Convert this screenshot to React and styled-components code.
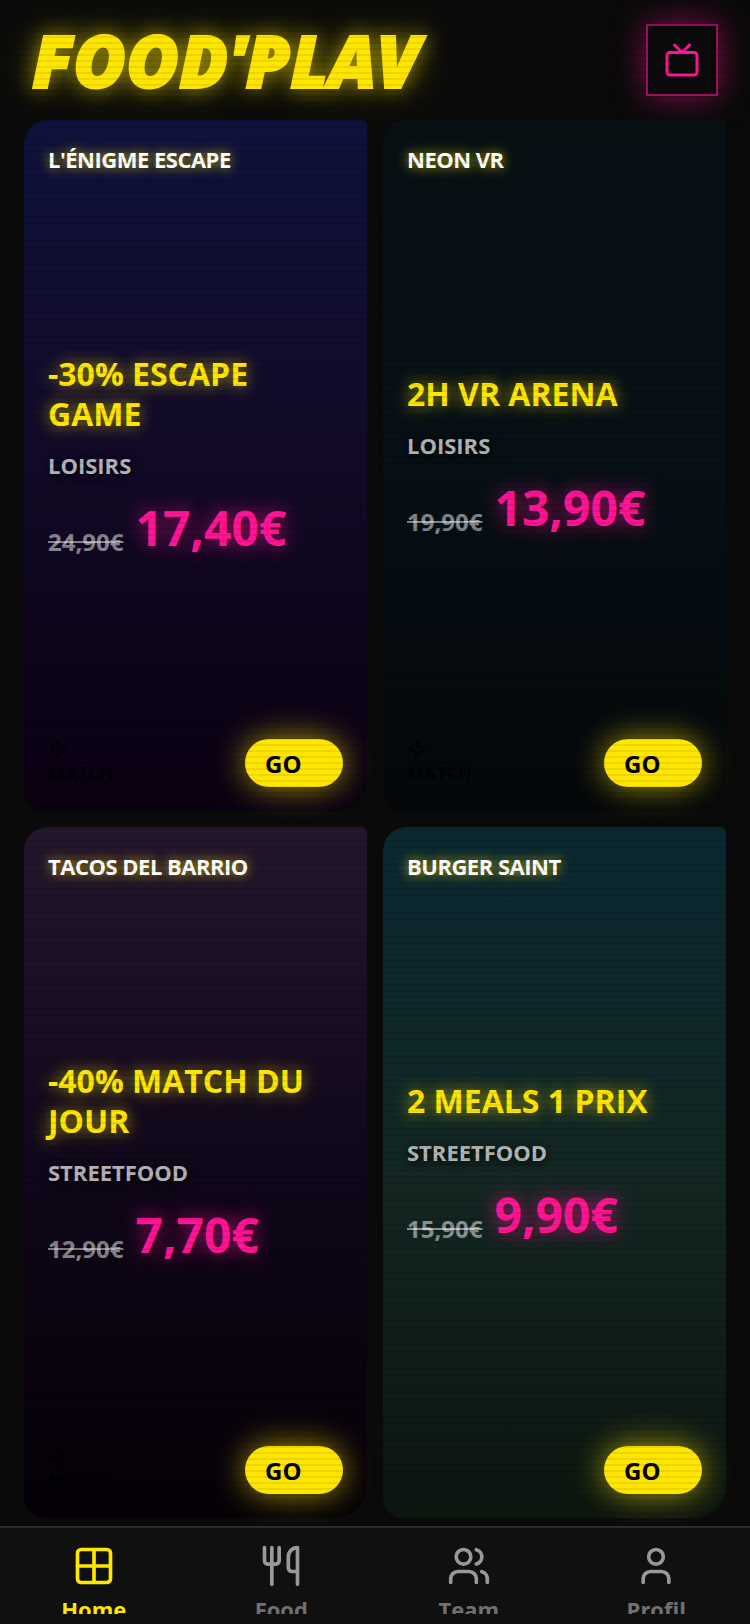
import styled, { createGlobalStyle } from "styled-components"
import { Tv, Grid2x2, Utensils, Users, User, Zap } from "lucide-react"

const offers = [
    { id: 1, place: "L'ÉNIGME ESCAPE", title: "-30% ESCAPE GAME", category: "LOISIRS", oldPrice: "24,90€", price: "17,40€", match: true, from: "#0f123c", mid: "#120a26", to: "#0a0011" },
    { id: 2, place: "NEON VR", title: "2H VR ARENA", category: "LOISIRS", oldPrice: "19,90€", price: "13,90€", match: true, from: "#071114", mid: "#071016", to: "#04070a" },
    { id: 3, place: "TACOS DEL BARRIO", title: "-40% MATCH DU JOUR", category: "STREETFOOD", oldPrice: "12,90€", price: "7,70€", match: true, from: "#24162d", mid: "#10071a", to: "#050006" },
    { id: 4, place: "BURGER SAINT", title: "2 MEALS 1 PRIX", category: "STREETFOOD", oldPrice: "15,90€", price: "9,90€", match: false, from: "#0a2831", mid: "#132723", to: "#0c150f" },
]

export default function App() {
    return (
        <Page>
            <GlobalStyle />
            <Header>
                <Logo>FOOD'PLAV</Logo>
                <TvButton aria-label="TV">
                    <Tv size={36} strokeWidth={2} />
                </TvButton>
            </Header>
            <Offers>
                {offers.map((offer) => (
                    <Card key={offer.id} $from={offer.from} $mid={offer.mid} $to={offer.to}>
                        <Place>{offer.place}</Place>
                        <Details>
                            <Title>{offer.title}</Title>
                            <Category>{offer.category}</Category>
                            <Prices>
                                <OldPrice>{offer.oldPrice}</OldPrice>
                                <Price>{offer.price}</Price>
                            </Prices>
                        </Details>
                        <CardFooter>
                            {offer.match && (
                                <Match>
                                    <Zap size={20} />
                                    MATCH
                                </Match>
                            )}
                            <GoButton>GO</GoButton>
                        </CardFooter>
                    </Card>
                ))}
            </Offers>
            <Scanlines />
            <Nav>
                <NavLink href="#home" $active>
                    <Grid2x2 size={44} />
                    <NavLabel $active>Home</NavLabel>
                </NavLink>
                <NavLink href="#food">
                    <Utensils size={44} />
                    <NavLabel>Food</NavLabel>
                </NavLink>
                <NavLink href="#team">
                    <Users size={44} />
                    <NavLabel>Team</NavLabel>
                </NavLink>
                <NavLink href="#profil">
                    <User size={44} />
                    <NavLabel>Profil</NavLabel>
                </NavLink>
            </Nav>
        </Page>
    )
}

const GlobalStyle = createGlobalStyle`
    body {
        margin: 0;
        background-color: #0A0A0A;
        font-family: 'Open Sans', sans-serif;
        font-weight: 700;
    }

    * {
        box-sizing: border-box;
    }
`;

const Page = styled.div`
    height: 100vh;
    display: flex;
    flex-direction: column;
    overflow: hidden;
    background-color: #0A0A0A;
`;

const Header = styled.header`
    display: flex;
    justify-content: space-between;
    align-items: center;
    padding: 24px 32px;
`;

const Logo = styled.h1`
    margin: 0;
    font-family: 'Noto Sans', sans-serif;
    font-size: 72px;
    font-style: italic;
    font-weight: 900;
    line-height: 72px;
    color: #FFE600;
    -webkit-text-stroke: 2px #FFE600;
    stroke-linejoin: round;
    text-shadow: 0 0 20px #FFE60099, 0 0 40px #FFE60066;
`;

const TvButton = styled.button`
    width: 72px;
    height: 72px;
    display: flex;
    justify-content: center;
    align-items: center;
    padding: 0;
    border: 2px solid #FF149399;
    background-color: #0A0A0A;
    box-shadow: 0 0 32px #FF149380;
    color: #FF1493;
`;

const Offers = styled.main`
    flex: 1;
    display: grid;
    grid-template-columns: 1fr 1fr;
    grid-auto-rows: 1fr;
    gap: 16px;
    padding: 0 24px 8px;
`;

const Card = styled.article`
    display: flex;
    flex-direction: column;
    justify-content: space-between;
    padding: 24px;
    border-radius: 24px 6px 32px 20px;
    background: linear-gradient(180deg, ${(props) => props.$from}, ${(props) => props.$mid} 50%, ${(props) => props.$to});
`;

const Place = styled.h2`
    margin: 0;
    font-size: 22px;
    line-height: 30px;
    letter-spacing: -0.5px;
    color: #FFFFFF;
    text-shadow: 0 0 12px #FFE600CC;
`;

const Details = styled.div`
    display: flex;
    flex-direction: column;
`;

const Title = styled.h3`
    margin: 0 0 16px;
    font-size: 32px;
    line-height: 40px;
    color: #FFE600;
    text-shadow: 0 0 16px #FFE600B3;
`;

const Category = styled.p`
    margin: 0 0 16px;
    font-size: 22px;
    line-height: 30px;
    color: #FFFFFFB3;
    text-shadow: 0 2px 8px #000000;
`;

const Prices = styled.p`
    display: flex;
    align-items: flex-end;
    gap: 12px;
    margin: 0;
`;

const OldPrice = styled.s`
    font-size: 24px;
    line-height: 36px;
    color: #FFFFFF80;
`;

const Price = styled.strong`
    font-size: 48px;
    font-weight: 700;
    line-height: 64px;
    color: #FF1493;
    text-shadow: 0 0 20px #FF1493B3;
`;

const CardFooter = styled.footer`
    display: flex;
    justify-content: flex-end;
    align-items: flex-end;
`;

const Match = styled.span`
    display: flex;
    flex-direction: column;
    margin-right: auto;
    font-size: 18px;
    line-height: 28px;
    color: #000000;
    opacity: 0.7;
`;

const GoButton = styled.button`
    width: 98px;
    height: 48px;
    padding: 0 20px;
    border: none;
    border-radius: 24px;
    background-color: #FFE600;
    box-shadow: 0 0 32px #FFE600A6;
    font-family: inherit;
    font-size: 24px;
    font-weight: 700;
    text-align: left;
    color: #000000;
`;

const Scanlines = styled.div`
    position: fixed;
    inset: 0;
    pointer-events: none;
    background: repeating-linear-gradient(180deg, #00000014 0 2px, transparent 2px 6px);
`;

const Nav = styled.nav`
    height: 98px;
    flex-shrink: 0;
    display: flex;
    position: relative;
    padding: 0 0 10px;
    border-top: 2px solid #2C2C2C;
    background-color: #101010;
`;

const NavLink = styled.a`
    flex: 1;
    display: flex;
    flex-direction: column;
    align-items: center;
    gap: 6px;
    padding-top: 16px;
    overflow: hidden;
    text-decoration: none;
    color: ${(props) => (props.$active ? "#FFE600" : "#999999")};

    svg {
        flex-shrink: 0;
    }
`;

const NavLabel = styled.span`
    font-size: 22px;
    line-height: 30px;
    opacity: ${(props) => (props.$active ? 1 : 0.7)};
`;
